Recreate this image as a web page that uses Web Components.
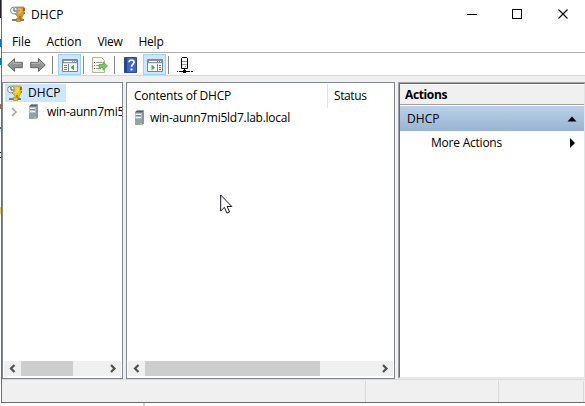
<!DOCTYPE html>
<html lang="en"><head><meta charset="utf-8"><title>DHCP</title>
<style>
html,body{margin:0;width:585px;height:406px;overflow:hidden;background:#fff}
body{font:12px/16px "Open Sans","Noto Sans",sans-serif;color:#000}
</style></head><body>
<dhcp-console></dhcp-console>
<script>
class Base extends HTMLElement{
  constructor(){super();this.attachShadow({mode:'open'});}
  put(css,html){this.shadowRoot.innerHTML=`<style>*{box-sizing:border-box}${css}</style>${html}`;}
}
/* Label fitted to a given advance width */
customElements.define('ui-label',class extends Base{
  connectedCallback(){
    this.put(':host{display:block;white-space:nowrap;flex:none;height:16px}span{display:inline-block}','<span><slot></slot></span>');
    const w=+this.getAttribute('w'),s=this.shadowRoot.querySelector('span');
    if(w){this.style.width=w+'px';const n=s.getBoundingClientRect().width;s.style.letterSpacing=(w-n)/this.textContent.length+'px';}
  }
});
const server=`<path d="M3 2L5 .5h7v13l-2 1.500H3z" fill="#a5b0b7"/><path d="M3 2.500h7V15H3z" fill="#b4bfc6"/><path d="M10 2.500l2-1.500v12.500l-2 1.500z" fill="#8b979f"/><path d="M3 2.500L5 .5h7l-2 2z" fill="#525d64"/><path d="M4 4.500h5M4 7.500h5" stroke="#f0f4f5"/><path d="M4 5.500h5" stroke="#7b878e"/><path d="M3 9h7v6H3z" fill="#93a1aa"/><path d="M8 13h2v2H8z" fill="#79f321"/>`;
const dhcp=(c,d)=>`<path d="M5 1h9v7l-2 3v2H8v-2L5 8z" fill="${c}" stroke="${d}" stroke-width=".7"/><path d="M8 3h3v3H9v2" fill="none" stroke="#fff" opacity=".45"/><path d="M13 2h2v3h-2z" fill="#c74b35"/><path d="M14 6h1v2h-1z" fill="#5d84a8"/><path d="M9 10h2v3H9z" fill="${d}"/><path d="M2 13h12v2H2z" fill="#737b80"/><path d="M6.500 12.500h4v3h-4z" fill="${c}" stroke="${d}" stroke-width=".7"/><circle cx="4" cy="4.500" r="3.500" fill="#e9eff4" stroke="#8c9499"/><path d="M4 2v3h3" fill="none" stroke="#455866"/>`;
const I={
 app:dhcp('#dc9a24','#a8741c'),tree:dhcp('#ecca10','#a8901c'),server,
 back:`<path d="M.7 8L7.500 1.600v3.700h7.800v5.400H7.500v3.700z" fill="#929292" stroke="#666"/><path d="M2.300 8L6.700 4v2.300H14" fill="none" stroke="#bbb"/>`,
 fwd:`<path d="M15.300 8L8.500 1.600v3.700H.7v5.400h7.800v3.700z" fill="#929292" stroke="#666"/><path d="M1.600 6.300h7.800V4L13.500 8" fill="none" stroke="#bbb"/>`,
 panL:`<path d="M.5 2.500h15v12H.5z" fill="#fff" stroke="#7b858d"/><path d="M1 3h14v3H1z" fill="#8d979f"/><path d="M2 4.500h8M11 4.500h1M13 4.500h1" stroke="#fff"/><path d="M1 6.500h14" stroke="#dce4e9"/><path d="M6.500 7v7" stroke="#7b858d"/><path d="M2 8.500h3M2 10.500h3M2 12.500h3" stroke="#617c91"/><path d="M12 7.500v6L8.500 10.500z" fill="#31b632"/>`,
 panR:`<path d="M.5 2.500h15v12H.5z" fill="#fff" stroke="#7b858d"/><path d="M1 3h14v3H1z" fill="#8d979f"/><path d="M2 4.500h8M11 4.500h1M13 4.500h1" stroke="#fff"/><path d="M1 6.500h14" stroke="#dce4e9"/><path d="M10.500 7v7" stroke="#7b858d"/><path d="M12 8.500h2M12 10.500h2M12 12.500h2" stroke="#617c91"/><path d="M4.500 7.500v6l3.500-3z" fill="#31b632"/>`,
 exp:`<path d="M.5.5h9l3 3v12H.5z" fill="#fffbe5" stroke="#b5b19f"/><path d="M2 5.500h1M2 8.500h1M2 11.500h1" stroke="#555"/><path d="M4 5.500h6M4 8.500h5M4 11.500h5" stroke="#9999ae"/><path d="M7 7.500h4V4.700L15.500 9l-4.500 4.300v-2.800H7z" fill="#75cf57" stroke="#56ab42" stroke-width=".8"/>`,
 help:`<path d="M1.500.5h12v15h-12z" fill="#3f63c7" stroke="#2b489c"/><path d="M2 1h2v14H2z" fill="#254496"/><path d="M6 5.200C6 2.300 11 2.400 11 5.300c0 2-2.500 2.300-2.500 4.500" fill="none" stroke="#fff" stroke-width="1.700"/><path d="M7.500 11.500h2v2h-2z" fill="#fff"/>`,
 net:`<path d="M4.500 11.500v-10l1-1h4l1 1v10z" fill="#fff" stroke="#000"/><path d="M5 4.500h5M5 7.500h5" stroke="#999"/><path d="M8 9.500h1" stroke="#888"/><path d="M7.500 12v2M0 14.500h1M2 14.500h11M14 14.500h2" stroke="#000"/><path d="M6 13h3v3H6z"/>`
};
customElements.define('ui-icon',class extends Base{
 connectedCallback(){this.put(':host{display:block;width:16px;height:16px;flex:none}svg{display:block;overflow:visible}',`<svg width="16" height="16" viewBox="0 0 16 16">${I[this.getAttribute('name')]}</svg>`);}
});
customElements.define('title-bar',class extends Base{
 connectedCallback(){this.put(`:host{display:flex;height:29px;padding:6px 24px 0 8px}ui-label{margin:1px 0 0 5px}svg{margin-left:auto;flex:none;overflow:visible}`,
 `<ui-icon name="app"></ui-icon><ui-label w="32.500">DHCP</ui-label><svg width="102" height="16"><g fill="none" stroke="#000" shape-rendering="crispEdges"><path d="M8 8.500h10M53.500 3.500h9v9h-9z"/></g><path d="M99.500 3.500l9 9m0-9l-9 9" stroke="#000" stroke-width="1.100"/></svg>`);}
});
customElements.define('menu-bar',class extends Base{
 connectedCallback(){this.put(`:host{display:flex;height:24px;padding:5px 0 0 10px;gap:16px;border-bottom:1px solid #b0b0b0}`,
 `<ui-label w="18.500">File</ui-label><ui-label w="35">Action</ui-label><ui-label w="25">View</ui-label><ui-label w="25">Help</ui-label>`);}
});
customElements.define('tool-bar',class extends Base{
 connectedCallback(){this.put(`:host{display:flex;height:23px;align-items:center;border-bottom:1px solid #d7d7d7;padding:1px 0 0 5px}
 i{width:1px;height:18px;background:#888}b{display:grid;place-items:center;width:23px;height:21px;background:#cce8ff;border:1px solid #99d1ff}`,
 `<ui-icon name="back"></ui-icon><ui-icon name="fwd" style="margin-left:7px"></ui-icon><i style="margin:0 5px 0 6px"></i><b><ui-icon name="panL"></ui-icon></b><i style="margin:0 8px 0 2px"></i><ui-icon name="exp"></ui-icon><i style="margin:0 8px 0 6px"></i><ui-icon name="help"></ui-icon><b style="margin-left:4px"><ui-icon name="panR"></ui-icon></b><i style="margin:0 8px 0 2px"></i><ui-icon name="net"></ui-icon>`);}
});
customElements.define('h-scroll',class extends Base{
 connectedCallback(){this.put(`:host{display:flex;height:15px;margin:auto 1px 2px;background:#f0f0f0;justify-content:space-between}svg{display:block;flex:none}i{background:#cdcdcd;height:15px;width:${this.getAttribute('thumb')}px;margin-right:auto}path{fill:none;stroke:#505050;stroke-width:2.200}`,
 `<svg width="17" height="15"><path d="M10.500 4L7 7.500l3.500 3.500"/></svg><i></i><svg width="17" height="15"><path d="M7 4l3.500 3.500L7 11"/></svg>`);}
});
customElements.define('tree-pane',class extends Base{
 connectedCallback(){this.put(`:host{display:flex;flex-direction:column;border:1px solid #828790;background:#fff;overflow:hidden}
 .r{display:flex;height:18px;align-items:center;width:61px;margin:1px 0 0 2px;background:#cce8ff;padding-left:2px;gap:5px}.c{display:flex;height:19px;align-items:center;padding-left:8px;overflow:hidden}.c svg{margin-right:8px;flex:none}.c ui-icon{margin-right:5px}`,
 `<div class="r"><ui-icon name="tree"></ui-icon><ui-label w="32.500">DHCP</ui-label></div><div class="c"><svg width="7" height="10"><path d="M1 1l4 4-4 4" fill="none" stroke="#a6a6a6" stroke-width="1.600"/></svg><ui-icon name="server"></ui-icon><ui-label w="77">win-aunn7mi5</ui-label></div><h-scroll thumb="52"></h-scroll>`);}
});
customElements.define('list-pane',class extends Base{
 connectedCallback(){this.put(`:host{display:flex;flex-direction:column;border:1px solid #828790;background:#fff}
 .h{display:flex;height:25px;padding:5px 0 0 7px}.h i{width:1px;height:24px;background:#e2e2e2;margin:-4px 6px 0 96px}.r{display:flex;height:20px;align-items:center;padding-left:5px;gap:2px}`,
 `<div class="h"><ui-label w="97">Contents of DHCP</ui-label><i></i><ui-label w="32.500">Status</ui-label></div><div class="r"><ui-icon name="server"></ui-icon><ui-label w="140">win-aunn7mi5ld7.lab.local</ui-label></div><h-scroll thumb="175"></h-scroll>`);}
});
customElements.define('actions-pane',class extends Base{
 connectedCallback(){this.put(`:host{display:block;border:1px solid #696969;border-right-color:#e3e3e3;border-bottom-color:#e3e3e3;background:#fff;box-shadow:-1px 0 #a0a0a0,0 -1px #a0a0a0,-1px -1px #a0a0a0}
 .t{height:21px;background:#f0f0f0;border-top:1px solid #fff;border-bottom:1px solid #a0a0a0;padding:2px 0 0 5px;font-weight:700}
 .g{display:flex;height:25px;margin-top:1px;background:linear-gradient(#b9d1ea,#99b4d1);padding:5px 7px 0 7px;justify-content:space-between}.m{display:flex;padding:4px 7px 0 31px;justify-content:space-between}svg{margin-top:3px}`,
 `<div class="t"><ui-label w="42">Actions</ui-label></div><div class="g"><ui-label w="32.500">DHCP</ui-label><svg width="10" height="10"><path d="M.5 7.500L5 2.500l4.500 5z"/></svg></div><div class="m"><ui-label w="71">More Actions</ui-label><svg width="9" height="10"><path d="M2 0v10l5-5z"/></svg></div>`);}
});
customElements.define('status-bar',class extends Base{
 connectedCallback(){this.put(`:host{display:grid;grid-template-columns:364px 133px 85px 1fr;height:23px;border-top:1px solid #d7d7d7;padding-top:1px;background:#f0f0f0}i{border-right:1px solid #d7d7d7}i:last-child{border:0}`,`<i></i><i></i><i></i><i></i>`);}
});
customElements.define('dhcp-console',class extends Base{
 connectedCallback(){this.put(`:host{display:grid;grid-template-columns:1px 584px;grid-template-rows:403px 3px;width:585px;height:406px}
 .bg{background:linear-gradient(#222 0 18px,#fff 18px 39px,#0078bd 39px 47px,#fff 47px 58px,#0078bd 58px 65px,#fff 65px 104px,#8b735e 104px 109px,#fff 109px 127px,#666 127px 129px,#bceeff 129px 132px,#fff 132px 152px,#222 152px 153px,#fff 153px 157px,#222 157px 158px,#fff 158px 207px,#e4d945 207px 214px,#fff 214px)}
 .w{border-left:1px solid #697078;border-bottom:1px solid #696969;background:#fff;display:flex;flex-direction:column}
 main{display:grid;grid-template-columns:121px 269px 187px;column-gap:3px;background:#f0f0f0;flex:1;padding-top:6px}
 actions-pane{margin:1px 0 1px 1px}.foot{grid-column:1/3;padding-left:143px}.foot i{display:block;width:2px;height:3px;background:#d7d7d7}
 .cursor{position:absolute;left:220px;top:194px}`,
 `<div class="bg"></div><div class="w"><title-bar></title-bar><menu-bar></menu-bar><tool-bar></tool-bar><main><tree-pane></tree-pane><list-pane></list-pane><actions-pane></actions-pane></main><status-bar></status-bar></div><div class="foot"><i></i></div><svg class="cursor" width="13" height="21"><path d="M.7 1v16l3.700-3.600 2.500 5.700 2.700-1.100-2.500-5.500h4.700z" fill="#fff" stroke="#171721"/></svg>`);}
});
</script></body></html>
